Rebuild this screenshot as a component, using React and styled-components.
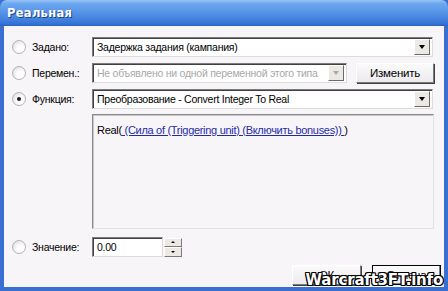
import React from "react";
import styled, { createGlobalStyle } from "styled-components";

const GlobalStyle = createGlobalStyle`
  html, body {
    margin: 0;
    padding: 0;
    background: #3a6fd2;
  }
  body {
    font-family: "Liberation Sans", Arial, sans-serif;
    font-size: 10.5px;
    letter-spacing: -0.25px;
    color: #000;
  }
`;

const Window = styled.div`
  width: 448px;
  height: 291px;
  display: flex;
  flex-direction: column;
  position: relative;
  overflow: hidden;
  background: #3a6fd2;
  border-radius: 7px 7px 0 0;
`;

const TitleBar = styled.div`
  height: 26px;
  flex: none;
  display: flex;
  align-items: center;
  padding-left: 7px;
  background: linear-gradient(
    #9cc6f4 0%,
    #6eaaf0 12%,
    #5b98e8 40%,
    #4585df 70%,
    #3472d6 92%,
    #2a5fc4 100%
  );
  color: #fff;
  font-family: "DejaVu Sans", Verdana, sans-serif;
  font-weight: bold;
  font-size: 11.5px;
  letter-spacing: 0.3px;
  text-shadow: 1px 1px 0 #1d3f8a;
`;

const Body = styled.div`
  flex: 1;
  margin: 0 4px 4px 4px;
  background: #f8f5f8;
  padding: 11px 10px 0 8px;
  display: flex;
  flex-direction: column;
`;

const Row = styled.div`
  display: flex;
  align-items: center;
  height: 20px;
  margin-bottom: ${(p) => p.$gap ?? 6}px;
`;

const Radio = styled.span`
  width: 12px;
  height: 12px;
  flex: none;
  border-radius: 50%;
  border: 1px solid #b4b4b4;
  background: radial-gradient(circle at 65% 65%, #fff 30%, #e4e4e4 75%, #cfcfcf 100%);
  display: flex;
  align-items: center;
  justify-content: center;
  margin-right: 6px;

  &::after {
    content: "";
    width: 4px;
    height: 4px;
    border-radius: 50%;
    background: ${(p) => (p.$checked ? "#1a1a1a" : "transparent")};
  }
`;

const Label = styled.span`
  width: 60px;
  flex: none;
  white-space: nowrap;
`;

const Field = styled.div`
  height: 20px;
  box-sizing: border-box;
  width: ${(p) => p.$width}px;
  flex: none;
  display: flex;
  align-items: center;
  background: #fff;
  border: 1px solid;
  border-color: #7c7c7c #dcdcdc #dcdcdc #7c7c7c;
  box-shadow: inset 1px 1px 0 #404040;
  padding: 0 2px 0 4px;
  color: ${(p) => (p.$disabled ? "#a8a8a8" : "#000")};
  white-space: nowrap;
  overflow: hidden;
`;

const FieldText = styled.span`
  flex: 1;
  overflow: hidden;
`;

const ArrowButton = styled.span`
  width: 16px;
  height: 16px;
  flex: none;
  box-sizing: border-box;
  background: #ece9e4;
  border: 1px solid;
  border-color: #fff #6a6a6a #6a6a6a #fff;
  display: flex;
  align-items: center;
  justify-content: center;

  &::after {
    content: "";
    border-left: 3.5px solid transparent;
    border-right: 3.5px solid transparent;
    border-top: 4px solid ${(p) => (p.$disabled ? "#a8a8a8" : "#000")};
  }
`;

const Button = styled.div`
  width: ${(p) => p.$width}px;
  height: 20px;
  box-sizing: border-box;
  flex: none;
  display: flex;
  align-items: center;
  justify-content: center;
  margin-left: ${(p) => p.$offset || 0}px;
  background: linear-gradient(#fbfbfb, #ece9ec);
  border: 1px solid;
  border-color: ${(p) =>
    p.$default ? "#000" : "#fff #7a7a7a #7a7a7a #fff"};
  box-shadow: ${(p) =>
    p.$default ? "inset -1px -1px 0 #808080, inset 1px 1px 0 #fff" : "1px 1px 0 #404040"};
  font-size: 11.5px;
`;

const Panel = styled.div`
  margin-left: 80px;
  height: 115px;
  box-sizing: border-box;
  border: 1px solid;
  border-color: #8a8a8a #e2e2e2 #e2e2e2 #8a8a8a;
  box-shadow: inset 1px 1px 0 #c8c8c8;
  padding: 9px 4px;
  margin-bottom: 8px;
  font-size: 11px;
  letter-spacing: -0.3px;
`;

const Link = styled.span`
  color: #1f2aa6;
  text-decoration: underline;
`;

const Spinner = styled.div`
  width: 18px;
  height: 19px;
  flex: none;
  display: flex;
  flex-direction: column;
  margin-left: 1px;
`;

const SpinHalf = styled.span`
  flex: 1;
  box-sizing: border-box;
  background: #ece9e4;
  border: 1px solid;
  border-color: #fff #7a7a7a #7a7a7a #fff;
  display: flex;
  align-items: center;
  justify-content: center;

  &::after {
    content: "";
    border-left: 2px solid transparent;
    border-right: 2px solid transparent;
    ${(p) => (p.$up ? "border-bottom: 2px solid #000;" : "border-top: 2px solid #000;")}
  }
`;

const Footer = styled.div`
  display: flex;
  justify-content: flex-end;
  gap: 11px;
  margin-top: 8px;
  margin-right: -7px;
`;

const Watermark = styled.div`
  position: absolute;
  right: 5px;
  bottom: 2px;
  font-family: "DejaVu Sans", Verdana, sans-serif;
  font-weight: bold;
  font-size: 15px;
  color: #fff;
  letter-spacing: -0.2px;
  text-shadow: -1px -1px 0 #000, 1px -1px 0 #000, -1px 1px 0 #000, 1px 1px 0 #000,
    0 1px 0 #000, 1px 0 0 #000, 0 -1px 0 #000, -1px 0 0 #000;
`;

export default function App() {
  return (
    <>
      <GlobalStyle />
      <Window>
        <TitleBar>Реальная</TitleBar>
        <Body>
          <Row>
            <Radio />
            <Label>Задано:</Label>
            <Field $width={341}>
              <FieldText>Задержка задания (кампания)</FieldText>
              <ArrowButton />
            </Field>
          </Row>
          <Row>
            <Radio />
            <Label>Перемен.:</Label>
            <Field $width={255} $disabled>
              <FieldText>Не объявлено ни одной переменной этого типа</FieldText>
              <ArrowButton $disabled />
            </Field>
            <Button $width={78} $offset={9}>
              Изменить
            </Button>
          </Row>
          <Row $gap={5}>
            <Radio $checked />
            <Label>Функция:</Label>
            <Field $width={341}>
              <FieldText>Преобразование - Convert Integer To Real</FieldText>
              <ArrowButton />
            </Field>
          </Row>
          <Panel>
            Real(
            <Link> (Сила of (Triggering unit) (Включить bonuses)) </Link>)
          </Panel>
          <Row $gap={0}>
            <Radio />
            <Label>Значение:</Label>
            <Field $width={71}>
              <FieldText>0.00</FieldText>
            </Field>
            <Spinner>
              <SpinHalf $up />
              <SpinHalf />
            </Spinner>
          </Row>
          <Footer>
            <Button $width={69}>ОК</Button>
            <Button $width={69} $default>
              Отмена
            </Button>
          </Footer>
        </Body>
        <Watermark>Warcraft3FT.info</Watermark>
      </Window>
    </>
  );
}
